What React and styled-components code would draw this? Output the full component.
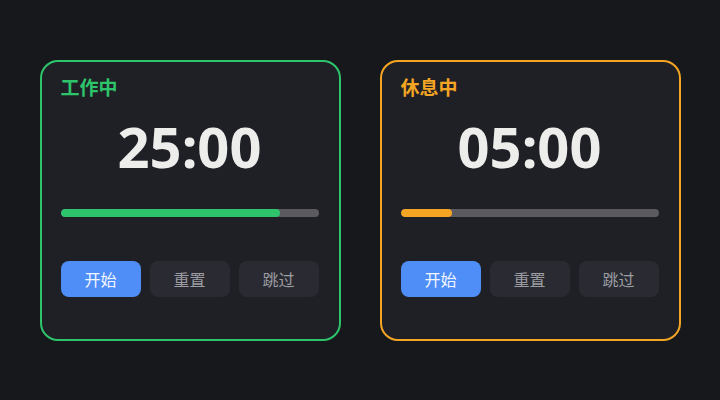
import React from 'react';
import styled, { createGlobalStyle } from 'styled-components';

const Global = createGlobalStyle`
	html, body {
		margin: 0;
		padding: 0;
		background: #17181c;
	}
	body {
		font-family: "Noto Sans", "Noto Sans CJK SC", sans-serif;
	}
`;

const Page = styled.div`
	width: 720px;
	height: 400px;
	display: flex;
	align-items: center;
	justify-content: center;
	gap: 39px;
`;

const Card = styled.div`
	box-sizing: border-box;
	width: 301px;
	height: 281px;
	padding: 12px 20px 0 19px;
	border: 2px solid ${(p) => p.$accent};
	border-radius: 18px;
	background: #1f2025;
	display: flex;
	flex-direction: column;
`;

const Title = styled.div`
	font-size: 19px;
	font-weight: 700;
	line-height: 26px;
	color: ${(p) => p.$accent};
	font-family: "Noto Sans CJK SC", sans-serif;
`;

const Time = styled.div`
	margin-top: 6px;
	text-align: center;
	font-size: 56px;
	font-weight: 700;
	line-height: 80px;
	color: #ededeb;
	font-family: "Noto Sans", sans-serif;
`;

const Track = styled.div`
	margin-top: 23px;
	height: 8px;
	border-radius: 4px;
	background: #5a5a5f;
	overflow: hidden;
`;

const Fill = styled.div`
	height: 100%;
	border-radius: 4px;
	background: ${(p) => p.$accent};
`;

const Buttons = styled.div`
	margin-top: 44px;
	display: grid;
	grid-template-columns: repeat(3, 1fr);
	gap: 9px;
`;

const Button = styled.button`
	height: 36px;
	border: none;
	border-radius: 8px;
	font-family: "Noto Sans CJK SC", sans-serif;
	font-size: 16px;
	background: ${(p) => (p.$primary ? '#4f8ef7' : '#2a2b32')};
	color: ${(p) => (p.$primary ? '#f4f7ff' : '#9c9ca2')};
	padding: 0;
	cursor: pointer;
`;

const timers = [
	{ label: '工作中', time: '25:00', accent: '#2ec46c', progress: 85 },
	{ label: '休息中', time: '05:00', accent: '#f4a523', progress: 20 },
];

const App = () => {
	return (
		<>
			<Global />
			<Page>
				{timers.map((t) => (
					<Card key={t.label} $accent={t.accent}>
						<Title $accent={t.accent}>{t.label}</Title>
						<Time>{t.time}</Time>
						<Track>
							<Fill $accent={t.accent} style={{ width: `${t.progress}%` }} />
						</Track>
						<Buttons>
							<Button $primary>开始</Button>
							<Button>重置</Button>
							<Button>跳过</Button>
						</Buttons>
					</Card>
				))}
			</Page>
		</>
	);
};

export default App;
